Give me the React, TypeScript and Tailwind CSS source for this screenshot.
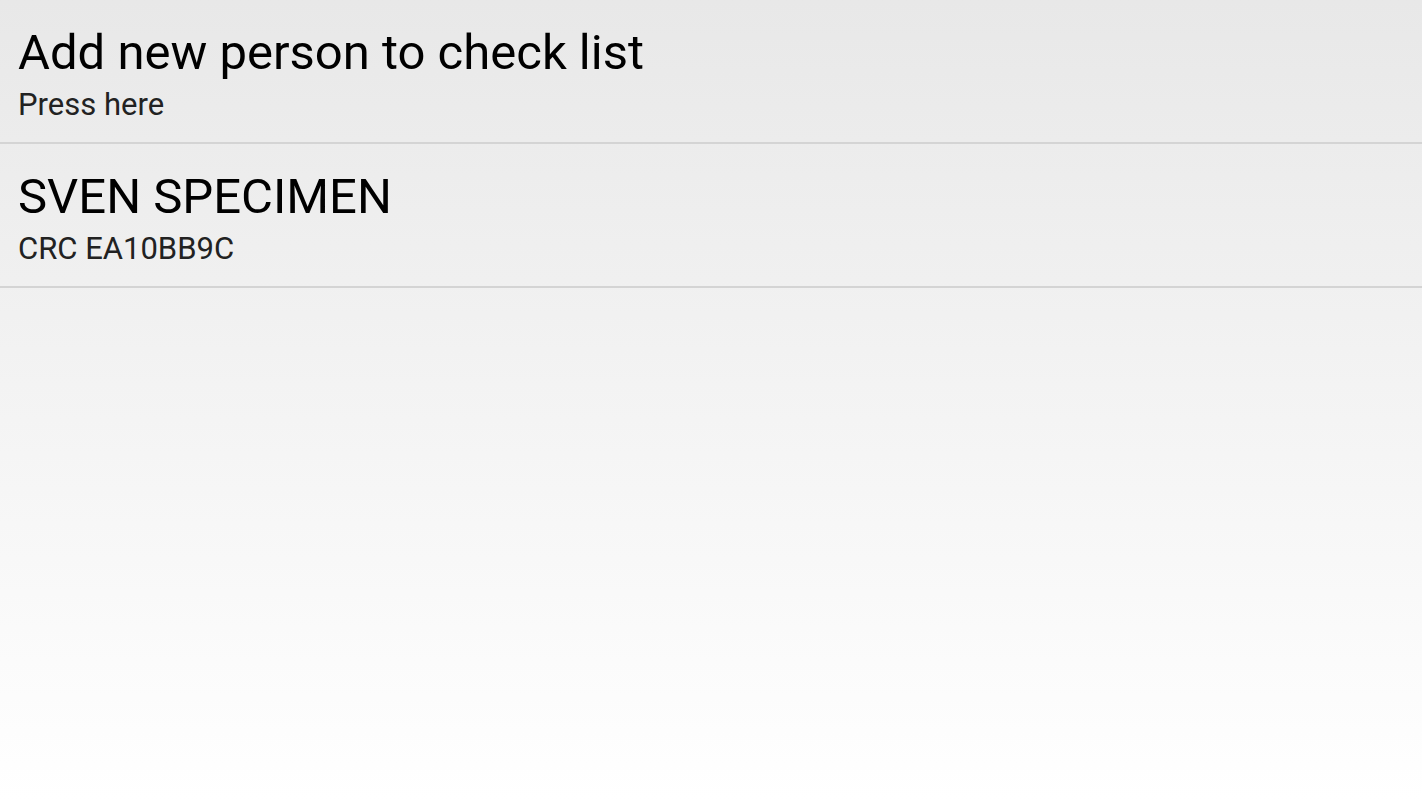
export default function App() {
  return (
    <div
      className="w-[1422px] h-[800px] bg-gradient-to-b from-[#e8e8e8] to-[#ffffff] flex flex-col"
      style={{ fontFamily: "Roboto, 'Liberation Sans', sans-serif" }}
    >
      <div className="h-[142px] pl-[18px] pt-[25px] flex flex-col">
        <div className="text-[49px] leading-[56px] text-black">Add new person to check list</div>
        <div className="text-[31px] leading-[36px] text-[#222222] mt-[6px]">Press here</div>
      </div>
      <div className="h-[2px] bg-[#d4d4d4]" />
      <div className="h-[142px] pl-[18px] pt-[25px] flex flex-col">
        <div className="text-[49px] leading-[56px] text-black">SVEN SPECIMEN</div>
        <div className="text-[31px] leading-[36px] text-[#222222] mt-[6px]">CRC EA10BB9C</div>
      </div>
      <div className="h-[2px] bg-[#d4d4d4]" />
    </div>
  );
}
